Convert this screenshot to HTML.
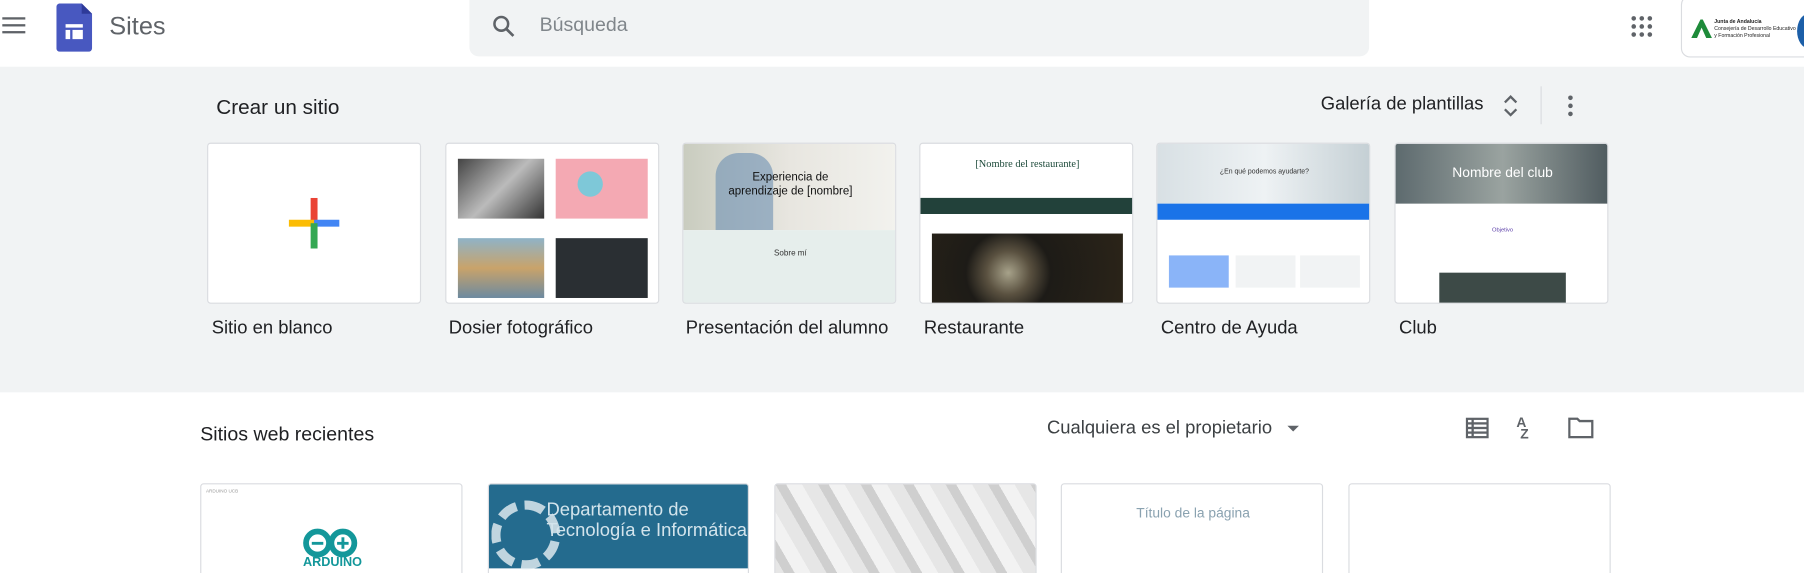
<!DOCTYPE html>
<html><head><meta charset="utf-8"><style>
*{box-sizing:border-box;margin:0;padding:0}
body{width:1804px;height:573px;overflow:hidden;background:#fff;font-family:"Liberation Sans",Arial,sans-serif}
#w{width:1568px;height:498px;transform:scale(1.150510);transform-origin:0 0;position:relative;overflow:hidden}
.a{position:absolute}
.band{left:0;top:58px;width:1568px;height:283px;background:#f1f3f4}
.card{top:124px;width:186px;height:140px;background:#fff;border:1px solid #dadce0;border-radius:3px;overflow:hidden}
.lbl{top:277px;font-size:16px;color:#202124}
.rc{top:420px;height:90px;background:#fff;border:1px solid #dadce0;border-radius:3px;overflow:hidden}
</style></head><body><div id="w">
<div class="a" style="left:2px;top:15px;width:20px;height:2px;background:#5f6368;box-shadow:0 6px 0 #5f6368,0 12px 0 #5f6368"></div>
<svg class="a" style="left:49px;top:3px" width="32" height="42" viewBox="0 0 32 42"><path d="M3 0H22L31 9V39a3 3 0 0 1-3 3H3a3 3 0 0 1-3-3V3a3 3 0 0 1 3-3z" fill="#4858c0"/><path d="M22 0V9H31z" fill="#2e3a99"/><rect x="8" y="18" width="15" height="3" fill="#fff"/><rect x="8" y="23" width="4" height="8" fill="#fff"/><rect x="14" y="23" width="9" height="8" fill="#fff"/></svg>
<div class="a" style="left:95px;top:10px;font-size:22px;color:#5f6368">Sites</div>
<div class="a" style="left:408px;top:-8px;width:782px;height:57px;background:#f1f3f4;border-radius:8px"></div>
<svg class="a" style="left:427px;top:12px" width="22" height="22" viewBox="0 0 24 24"><circle cx="9.5" cy="9.5" r="6.5" fill="none" stroke="#5f6368" stroke-width="2.4"/><path d="M14.5 14.5L21 21" stroke="#5f6368" stroke-width="2.6"/></svg>
<div class="a" style="left:469px;top:12px;font-size:17px;color:#80868b">Búsqueda</div>
<svg class="a" style="left:1417px;top:13px" width="20" height="20" viewBox="0 0 20 20" fill="#5f6368"><circle cx="3" cy="3" r="2"/><circle cx="10" cy="3" r="2"/><circle cx="17" cy="3" r="2"/><circle cx="3" cy="10" r="2"/><circle cx="10" cy="10" r="2"/><circle cx="17" cy="10" r="2"/><circle cx="3" cy="17" r="2"/><circle cx="10" cy="17" r="2"/><circle cx="17" cy="17" r="2"/></svg>
<div class="a" style="left:1461px;top:-4px;width:120px;height:54px;border:1px solid #dadce0;border-radius:8px;background:#fff"></div>
<svg class="a" style="left:1470px;top:16px" width="18" height="18" viewBox="0 0 18 18"><path d="M0 17L8 1H10L18 17H13L9 8L5 17z" fill="#1e8b3a"/></svg>
<div class="a" style="left:1490px;top:16px;font-size:4.5px;line-height:6px;color:#222;white-space:nowrap"><b>Junta de Andalucía</b><br>Consejería de Desarrollo Educativo<br>y Formación Profesional</div>
<div class="a" style="left:1562px;top:12px;width:20px;height:30px;border-radius:50%;background:#1c5fa8"></div>
<div class="a band"></div>
<div class="a" style="left:188px;top:83px;font-size:18px;color:#202124">Crear un sitio</div>
<div class="a" style="left:1148px;top:82px;font-size:16px;color:#202124">Galería de plantillas</div>
<svg class="a" style="left:1306px;top:82px" width="14" height="20" viewBox="0 0 14 20"><path d="M2 7L7 2L12 7M2 13L7 18L12 13" fill="none" stroke="#5f6368" stroke-width="2"/></svg>
<div class="a" style="left:1339px;top:75px;width:1px;height:33px;background:#dadce0"></div>
<svg class="a" style="left:1362px;top:82px" width="6" height="20" viewBox="0 0 6 20" fill="#5f6368"><circle cx="3" cy="3" r="2"/><circle cx="3" cy="10" r="2"/><circle cx="3" cy="17" r="2"/></svg>
<div class="a card" style="left:180px"><svg class="a" style="left:70px;top:47px" width="44" height="44"><rect x="19" y="0" width="6" height="22" fill="#ea4335"/><rect x="0" y="19" width="22" height="6" fill="#fbbc04"/><rect x="22" y="19" width="22" height="6" fill="#4285f4"/><rect x="19" y="22" width="6" height="22" fill="#34a853"/></svg></div>
<div class="a card" style="left:387px"><div class="a" style="left:10px;top:13px;width:75px;height:52px;background:linear-gradient(135deg,#444,#bbb,#333)"></div><div class="a" style="left:95px;top:13px;width:80px;height:52px;background:#f4a9b3"></div><div class="a" style="left:114px;top:24px;width:22px;height:22px;border-radius:50%;background:#7ec8d8"></div><div class="a" style="left:10px;top:82px;width:75px;height:52px;background:linear-gradient(#8fb3c7,#c9a36a,#6c8aa0)"></div><div class="a" style="left:95px;top:82px;width:80px;height:52px;background:#2a2f33"></div></div>
<div class="a card" style="left:593px"><div class="a" style="left:0;top:0;width:186px;height:75px;background:linear-gradient(90deg,#c9ccbf,#e8e6e0,#f2f2ee)"></div><div class="a" style="left:28px;top:8px;width:50px;height:67px;background:#6d8fb3;border-radius:20px 20px 0 0;opacity:.6"></div><div class="a" style="left:0;top:24px;width:186px;text-align:center;font-size:10px;color:#111;line-height:12px">Experiencia de<br>aprendizaje de [nombre]</div><div class="a" style="left:0;top:75px;width:186px;height:65px;background:#e6eeec"></div><div class="a" style="left:0;top:92px;width:186px;text-align:center;font-size:7px;color:#333">Sobre mí</div></div>
<div class="a card" style="left:799px"><div class="a" style="left:0;top:12px;width:186px;text-align:center;font-size:9px;color:#1d4a3a;font-family:'Liberation Serif',serif">[Nombre del restaurante]</div><div class="a" style="left:0;top:47px;width:186px;height:14px;background:#22413a"></div><div class="a" style="left:10px;top:78px;width:166px;height:62px;background:radial-gradient(circle at 40% 55%,#a7a28a 0,#5a5140 18%,#1d1b17 35%,#2b2418 100%)"></div></div>
<div class="a card" style="left:1005px"><div class="a" style="left:0;top:0;width:186px;height:52px;background:linear-gradient(90deg,#d8e0e4,#eef2f4,#c4cfd4)"></div><div class="a" style="left:0;top:22px;width:186px;text-align:center;font-size:6px;color:#333">¿En qué podemos ayudarte?</div><div class="a" style="left:0;top:52px;width:186px;height:14px;background:#1a73e8"></div><div class="a" style="left:10px;top:97px;width:52px;height:28px;background:#8ab4f8"></div><div class="a" style="left:68px;top:97px;width:52px;height:28px;background:#f1f3f4"></div><div class="a" style="left:124px;top:97px;width:52px;height:28px;background:#f1f3f4"></div></div>
<div class="a card" style="left:1212px"><div class="a" style="left:0;top:0;width:186px;height:52px;background:linear-gradient(90deg,#5d6a6e,#9aa3a0,#4f5b5f)"></div><div class="a" style="left:0;top:18px;width:186px;text-align:center;font-size:12px;color:#fff">Nombre del club</div><div class="a" style="left:0;top:72px;width:186px;text-align:center;font-size:5px;color:#5b3ea8">Objetivo</div><div class="a" style="left:38px;top:112px;width:110px;height:28px;background:#3d4a47"></div></div>
<div class="a lbl" style="left:184px">Sitio en blanco</div>
<div class="a lbl" style="left:390px">Dosier fotográfico</div>
<div class="a lbl" style="left:596px">Presentación del alumno</div>
<div class="a lbl" style="left:803px">Restaurante</div>
<div class="a lbl" style="left:1009px">Centro de Ayuda</div>
<div class="a lbl" style="left:1216px">Club</div>
<div class="a" style="left:174px;top:368px;font-size:17px;color:#202124">Sitios web recientes</div>
<div class="a" style="left:910px;top:364px;font-size:16px;color:#3c4043">Cualquiera es el propietario</div>
<svg class="a" style="left:1118px;top:369px" width="12" height="8"><path d="M1 1H11L6 6z" fill="#5f6368"/></svg>
<svg class="a" style="left:1274px;top:363px" width="20" height="18" viewBox="0 0 20 18" fill="#5f6368"><rect x="0" y="0" width="20" height="18"/><g fill="#fff"><rect x="2" y="2" width="3" height="2"/><rect x="7" y="2" width="11" height="2"/><rect x="2" y="6" width="3" height="2"/><rect x="7" y="6" width="11" height="2"/><rect x="2" y="10" width="3" height="2"/><rect x="7" y="10" width="11" height="2"/><rect x="2" y="14" width="3" height="2"/><rect x="7" y="14" width="11" height="2"/></g></svg>
<div class="a" style="left:1318px;top:362px;font-size:12px;font-weight:bold;color:#5f6368;line-height:10px">A<br>&nbsp;Z</div>
<svg class="a" style="left:1363px;top:362px" width="22" height="19" viewBox="0 0 22 19"><path d="M1 2H8L10 4H21V18H1z" fill="none" stroke="#5f6368" stroke-width="2"/></svg>
<div class="a rc" style="left:174px;width:228px"><div class="a" style="left:4px;top:3px;font-size:4px;color:#999">ARDUINO UCB</div><svg class="a" style="left:88px;top:38px" width="48" height="28" viewBox="0 0 48 28"><circle cx="13" cy="13" r="10" fill="none" stroke="#13979a" stroke-width="5"/><circle cx="35" cy="13" r="10" fill="none" stroke="#13979a" stroke-width="5"/><rect x="8" y="12" width="10" height="2.5" fill="#13979a"/><rect x="30" y="12" width="10" height="2.5" fill="#13979a"/><rect x="33.8" y="8" width="2.5" height="10" fill="#13979a"/></svg><div class="a" style="left:0;top:62px;width:228px;text-align:center;font-size:11px;font-weight:bold;color:#13979a">ARDUINO</div></div>
<div class="a rc" style="left:424px;width:227px"><div class="a" style="left:0;top:0;width:227px;height:73px;background:#246b8e"></div><div class="a" style="left:2px;top:14px;width:60px;height:60px;border-radius:50%;border:8px dashed #e8f0f4;opacity:.8"></div><div class="a" style="left:50px;top:14px;font-size:16px;color:#d3e4ec;line-height:18px;font-weight:300">Departamento de<br>Tecnología e Informática</div><div class="a" style="left:14px;top:80px;font-size:4px;color:#666">Bienvenido/a a la web del Departamento de Tecnología-Informática del IES El Tablero.</div></div>
<div class="a rc" style="left:673px;width:228px;background:repeating-linear-gradient(60deg,#e6e6e6 0 12px,#cfcfcf 12px 20px,#f2f2f2 20px 32px)"></div>
<div class="a rc" style="left:922px;width:228px"><div class="a" style="left:0;top:18px;width:228px;text-align:center;font-size:12px;color:#8aa2b0">Título de la página</div></div>
<div class="a rc" style="left:1172px;width:228px"></div>
</div></body></html>
